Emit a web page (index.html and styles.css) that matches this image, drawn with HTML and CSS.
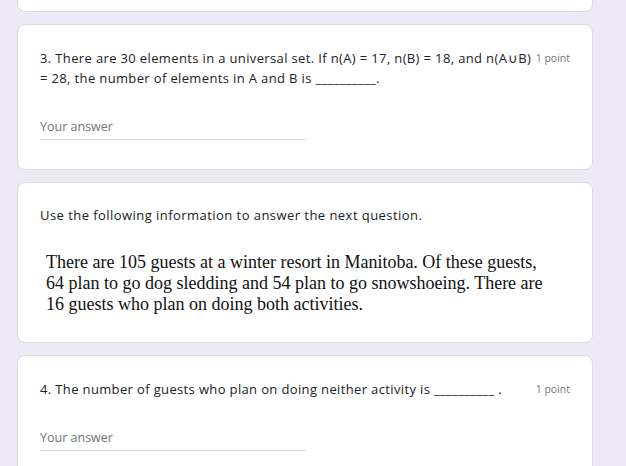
FILE: index.html
```html
<!DOCTYPE html>
<html>
<head>
<meta charset="utf-8">
<link rel="stylesheet" href="styles.css">
</head>
<body>
<div class="form">
  <div class="card card-tail"></div>

  <div class="card q">
    <div class="q-head">
      <div class="q-title">3. There are 30 elements in a universal set. If n(A) = 17, n(B) = 18, and n(A<span class="cup">∪</span>B) = 28, the number of elements in A and B is __________.</div>
      <div class="points">1 point</div>
    </div>
    <div class="answer">Your answer</div>
  </div>

  <div class="card info">
    <div class="info-title">Use the following information to answer the next question.</div>
    <div class="info-image">There are 105 guests at a winter resort in Manitoba. Of these guests, 64 plan to go dog sledding and 54 plan to go snowshoeing. There are 16 guests who plan on doing both activities.</div>
  </div>

  <div class="card q">
    <div class="q-head">
      <div class="q-title">4. The number of guests who plan on doing neither activity is __________ .</div>
      <div class="points">1 point</div>
    </div>
    <div class="answer">Your answer</div>
  </div>
</div>
</body>
</html>
```
FILE: styles.css
```css
html, body {
  margin: 0;
  padding: 0;
  background: #ede9f7;
  height: 100%;
  overflow: hidden;
}
body {
  font-family: "Open Sans", Roboto, sans-serif;
  color: #202124;
}
.form {
  width: 576px;
  margin-left: 17px;
  display: flex;
  flex-direction: column;
  gap: 12px;
}
.card {
  background: #fff;
  border: 1px solid #dadce0;
  border-radius: 8px;
  box-sizing: border-box;
}
.card-tail {
  height: 12px;
  border-top: none;
  border-radius: 0 0 8px 8px;
}
.q {
  padding: 23px 22px 29px 22px;
}
.q-head {
  display: flex;
  align-items: flex-start;
  gap: 2px;
}
.q-title {
  flex: 1;
  font-size: 13px;
  line-height: 20px;
  letter-spacing: 0.36px;
}
.cup {
  font-family: Roboto, sans-serif;
  letter-spacing: 0;
  line-height: 1;
  padding: 0 0.5px;
}
.points {
  font-size: 10.5px;
  color: #70757a;
  line-height: 20px;
  white-space: nowrap;
}
.answer {
  margin-top: 30px;
  width: 266px;
  font-size: 12.5px;
  color: #70757a;
  padding-bottom: 4px;
  border-bottom: 1px solid #dadce0;
}
.info {
  padding: 22px 22px 27px 22px;
}
.info-title {
  font-size: 13px;
  line-height: 20px;
  letter-spacing: 0.45px;
}
.info-image {
  margin-top: 27px;
  padding-left: 6px;
  width: 510px;
  font-family: "Liberation Serif", "Times New Roman", serif;
  font-size: 18px;
  line-height: 21px;
  color: #111;
}
```
